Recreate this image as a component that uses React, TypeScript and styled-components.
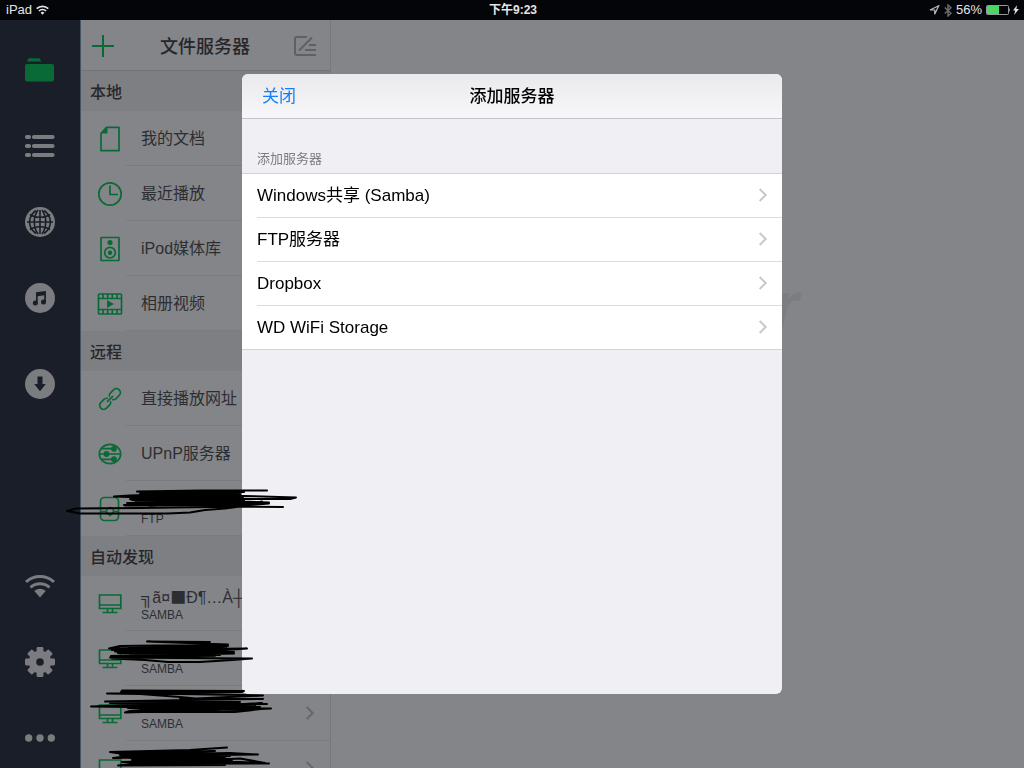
import React from 'react';
import styled, { createGlobalStyle } from 'styled-components';

const GREEN = '#0a6a37';
const NAVY = '#1a1e29';
const MUTED = '#7b7c80';

const GlobalStyle = createGlobalStyle`
  * { box-sizing: border-box; }
  body {
    margin: 0;
    overflow: hidden;
    background: #848588;
    font-family: "Liberation Sans", "Noto Sans CJK SC", sans-serif;
  }
  button { font: inherit; color: inherit; background: none; border: 0; padding: 0; text-align: left; }
  h1, h2, h3, p, ul { margin: 0; padding: 0; font-weight: 400; }
  ul { list-style: none; }
  svg { display: block; flex: none; }
`;

const Screen = styled.div`
  display: flex;
  flex-direction: column;
  height: 100vh;
  overflow: hidden;
`;

const StatusBar = styled.header`
  display: grid;
  grid-template-columns: 1fr auto 1fr;
  align-items: center;
  flex: none;
  height: 20px;
  padding: 0 4px 0 6px;
  background: #040508;
  color: #e4e4e6;
  font-size: 13px;
  line-height: 20px;
`;

const StatusGroup = styled.div<{ $end?: boolean }>`
  display: flex;
  align-items: center;
  justify-content: ${p => (p.$end ? 'flex-end' : 'flex-start')};
  gap: 4px;
`;

const Clock = styled.time`
  font-size: 12px;
  font-weight: 700;
`;

const Main = styled.div`
  display: flex;
  flex: 1;
  min-height: 0;
`;

const Nav = styled.nav`
  display: flex;
  flex-direction: column;
  justify-content: space-between;
  flex: none;
  width: 81px;
  padding: 35px 0 15px;
  background: ${NAVY};
  border-right: 1px solid #465360;
`;

const NavGroup = styled.div`
  display: flex;
  flex-direction: column;
  align-items: center;
  gap: 46px;
`;

const NavButton = styled.button<{ $spaced?: boolean }>`
  width: 30px;
  height: 30px;
  margin-top: ${p => (p.$spaced ? 10 : 0)}px;
  color: ${MUTED};
`;

const Panel = styled.aside`
  flex: none;
  width: 250px;
  overflow: hidden;
  background: #848588;
  border-right: 1px solid #77787b;
  color: #27272b;
`;

const Toolbar = styled.div`
  display: flex;
  align-items: center;
  justify-content: space-between;
  height: 51px;
  padding: 2px 13px 0 11px;
  border-bottom: 1px solid #727376;
`;

const PanelTitle = styled.h1`
  padding: 2px 0 0 2px;
  font-size: 18px;
  font-weight: 500;
  line-height: 24px;
`;

const SectionTitle = styled.h2`
  height: 40px;
  padding: 2px 0 0 9px;
  background: #7e7f82;
  font-size: 16px;
  font-weight: 500;
  line-height: 40px;
`;

const Row = styled.button`
  display: flex;
  align-items: center;
  width: 100%;
  height: 55px;
`;

const RowIcon = styled.span`
  display: flex;
  justify-content: center;
  flex: none;
  width: 45px;
  padding-left: 13px;
  color: ${GREEN};
`;

const RowBody = styled.span`
  display: flex;
  align-items: center;
  justify-content: space-between;
  flex: 1;
  height: 55px;
  padding: 0 15px;
  border-bottom: 1px solid #7a7b7e;
  color: #2d2e32;
`;

const RowText = styled.span`
  display: flex;
  flex-direction: column;
  white-space: nowrap;
`;

const RowName = styled.span`
  min-height: 22px;
  padding-top: 2px;
  font-size: 16px;
  line-height: 20px;
`;

const WideGlyph = styled.span`
  font-family: "Noto Sans CJK SC", sans-serif;
`;

const RowKind = styled.span`
  font-size: 12px;
  line-height: 14px;
`;

const Content = styled.main`
  flex: 1;
  min-width: 0;
  padding-top: 246px;
  text-align: center;
`;

const Watermark = styled.p`
  color: #7c7d80;
  font-size: 67px;
  font-style: italic;
  font-weight: 700;
  line-height: 78px;
`;

const Overlay = styled.div`
  position: fixed;
  inset: 0;
  display: flex;
  align-items: center;
  justify-content: center;
`;

const Dialog = styled.section`
  width: 540px;
  max-width: 100%;
  height: 620px;
  max-height: 100%;
  overflow: hidden;
  border-radius: 6px;
  background: #efeff4;
  color: #000;
`;

const DialogHeader = styled.div`
  display: grid;
  grid-template-columns: 1fr auto 1fr;
  align-items: center;
  height: 45px;
  padding: 2px 20px 0;
  border-bottom: 1px solid #c4c4c8;
  background: linear-gradient(#eaeaec, #f7f7f9);
  font-size: 17px;
  line-height: 24px;
`;

const CloseButton = styled.button`
  justify-self: start;
  color: #157efb;
`;

const DialogTitle = styled.h2`
  font-size: 17px;
  font-weight: 500;
`;

const GroupTitle = styled.h3`
  padding: 30px 15px 4px;
  color: #7c7c81;
  font-size: 13px;
  line-height: 20px;
`;

const OptionList = styled.ul`
  background: #fff;
  border-top: 1px solid #d3d3d7;
  border-bottom: 1px solid #d3d3d7;
`;

const OptionItem = styled.li`
  padding-left: 15px;
`;

const Option = styled.button`
  display: flex;
  align-items: center;
  justify-content: space-between;
  width: 100%;
  height: 44px;
  padding-right: 14px;
  border-bottom: 1px solid #dcdce0;
  font-size: 17px;
  line-height: 24px;

  ${OptionItem}:last-child & {
    height: 43px;
    border-bottom: 0;
  }
`;

const Ink = styled.svg`
  position: fixed;
  top: 0;
  left: 0;
  pointer-events: none;
`;

const Chevron = ({ color }: { color: string }) => (
  <svg width="10" height="15" viewBox="0 0 10 15" fill="none" stroke={color} strokeWidth="2">
    <path d="M1.700 1 7.700 7 1.700 13" />
  </svg>
);

const WifiSmall = () => (
  <svg width="13" height="10" viewBox="0 0 13 10" fill="none" stroke="#e4e4e6" strokeWidth="1.700">
    <path d="M.7 3.700a8.300 8.300 0 0 1 11.600 0M2.900 6a5.100 5.100 0 0 1 7.200 0" />
    <path d="M4.600 7.700a2.800 2.800 0 0 1 3.800 0L6.500 9.800z" fill="#e4e4e6" stroke="none" />
  </svg>
);

const StatusIcons = {
  location: (
    <svg width="11" height="10" viewBox="0 0 11 10" fill="none" stroke="#b9babc" strokeWidth="1.200">
      <path d="M1 5 9.700.8 5.700 9.300V5z" />
    </svg>
  ),
  bluetooth: (
    <svg width="8" height="13" viewBox="0 0 8 13" fill="none" stroke="#6c6d70" strokeWidth="1.400">
      <path d="M.8 3.600 7 9.300 4 12V1l3 2.800L.8 9.400" />
    </svg>
  ),
  battery: (
    <svg width="34" height="10" viewBox="0 0 34 10">
      <rect x=".5" y=".5" width="22" height="9" rx="1" fill="none" stroke="#98999b" />
      <path d="M23 3q2 2 0 4z" fill="#98999b" />
      <rect x="1" y="1" width="12" height="8" fill="#4cd764" />
      <path d="M31 .2 27 5.600h2.300L28 10l5-6h-2.600z" fill="#e4e4e6" />
    </svg>
  ),
};

const navSvg = { width: 30, height: 30, viewBox: '0 0 30 30', fill: 'currentColor' };

const NavIcons = {
  folder: (
    <svg {...navSvg} fill={GREEN}>
      <path d="M2 6.400 3.200 4q.4-.8 1.200-.8h9.400q.8 0 1.200.8l1.200 2.400z" />
      <rect y="9" width="29" height="17.600" rx="2" />
    </svg>
  ),
  list: (
    <svg {...navSvg}>
      {[4, 13, 22].map(y => (
        <g key={y}>
          <rect y={y} width="6" height="4" rx="1.800" />
          <rect x="7" y={y} width="22.500" height="4" rx="1.800" />
        </g>
      ))}
    </svg>
  ),
  globe: (
    <svg {...navSvg}>
      <circle cx="15" cy="15" r="15" />
      <g fill="none" stroke={NAVY} strokeWidth="1.600">
        <path d="M15 3v24M2 15h26" />
        <path d="M10.800 3.500C2.500 10 2.500 20 10.800 26.500M19.200 3.500C27.500 10 27.500 20 19.200 26.500M13 3C8 10 8 20 13 27M17 3C22 10 22 20 17 27" />
        <path d="M5 7.500c5 3.600 15 3.600 20 0M5 22.500c5-3.600 15-3.600 20 0" />
      </g>
    </svg>
  ),
  music: (
    <svg {...navSvg}>
      <circle cx="15" cy="15" r="15" />
      <g fill={NAVY}>
        <path d="M11 9.300 20.900 8v11h-1.700v-6.700l-6.500.9v7.300H11z" />
        <circle cx="10.300" cy="20" r="2.500" />
        <circle cx="18.500" cy="19" r="2.500" />
      </g>
    </svg>
  ),
  download: (
    <svg {...navSvg}>
      <circle cx="15" cy="15" r="15" />
      <path d="M12.500 7.500h5V15h3.300L15 22.300 9.200 15h3.300z" fill={NAVY} />
    </svg>
  ),
  wifi: (
    <svg {...navSvg}>
      <g fill="none" stroke="currentColor" strokeWidth="3">
        <path d="M1 11c8-7.300 20-7.300 28 0M5.500 16.300c5.500-4.900 13.500-4.900 19 0" />
      </g>
      <path d="M9.300 20c3.400-3 8-3 11.400 0L15 26.500z" />
    </svg>
  ),
  gear: (
    <svg {...navSvg}>
      <path
        fillRule="evenodd"
        d="M15 3.800a11.200 11.200 0 1 0 0 22.400 11.200 11.200 0 0 0 0-22.400zm0 7.400a3.800 3.800 0 1 1 0 7.600 3.800 3.800 0 0 1 0-7.600z"
      />
      {[0, 45, 90, 135, 180, 225, 270, 315].map(a => (
        <rect key={a} x="11.600" y="0" width="6.800" height="7.500" rx="1.300" transform={`rotate(${a} 15 15)`} />
      ))}
    </svg>
  ),
  more: (
    <svg {...navSvg}>
      <circle cx="3.700" cy="15" r="3.700" />
      <circle cx="15" cy="15" r="3.700" />
      <circle cx="26.300" cy="15" r="3.700" />
    </svg>
  ),
};

const rowSvg = {
  width: 26,
  height: 26,
  viewBox: '0 0 26 26',
  fill: 'none',
  stroke: 'currentColor',
  strokeWidth: 1.7,
};

const RowIcons = {
  document: (
    <svg {...rowSvg}>
      <path d="M9.500 1.300H22v23.400H4V7.500z" strokeLinejoin="round" />
      <path d="M10.500 1v6.500H4z" fill="currentColor" stroke="none" />
    </svg>
  ),
  clock: (
    <svg {...rowSvg}>
      <circle cx="13" cy="13" r="11.200" />
      <path d="M13 4.500V13.500h8" />
    </svg>
  ),
  speaker: (
    <svg {...rowSvg}>
      <rect x="4" y="1.500" width="18" height="23" rx=".5" />
      <circle cx="13" cy="6.500" r="2.600" fill="currentColor" stroke="none" />
      <circle cx="13" cy="16.700" r="5.300" />
      <circle cx="13" cy="16.700" r="2.200" fill="currentColor" stroke="none" />
    </svg>
  ),
  film: (
    <svg {...rowSvg}>
      <rect x="1.500" y="3" width="23" height="20" rx="1" />
      <path d="M1.500 7.500h23M1.500 18.500h23M6 3v4.500M10.700 3v4.500M15.300 3v4.500M20 3v4.500M6 18.500V23M10.700 18.500V23M15.300 18.500V23M20 18.500V23" />
      <path d="M10 9l7 4-7 4z" fill="currentColor" stroke="none" />
    </svg>
  ),
  link: (
    <svg {...rowSvg} strokeLinecap="round">
      <g transform="rotate(-45 13 13)">
        <path d="M14.500 10.500Q15.500 9 18 9h4a4 4 0 0 1 0 8h-4q-2.500 0-3.500-1.500" />
        <path d="M11.500 10.500Q10.500 9 8 9H4a4 4 0 0 0 0 8h4q2.500 0 3.500-1.500" />
        <path d="M9.500 13h7" />
      </g>
    </svg>
  ),
  upnp: (
    <svg {...rowSvg}>
      <ellipse cx="13" cy="13" rx="10.700" ry="9.700" />
      <path d="M5 7.700h11M2 13h7M10 13h14M5 18.300h11" />
      <g fill="currentColor" stroke="none">
        <circle cx="17" cy="7.800" r="2.900" />
        <circle cx="9.500" cy="13" r="2.900" />
        <circle cx="17" cy="18.200" r="2.900" />
      </g>
    </svg>
  ),
  disk: (
    <svg {...rowSvg}>
      <rect x="3.500" y="1.500" width="18" height="23" rx="4" />
      <path d="M3.500 15.500H9l4 4 4-4h4.500" />
      <circle cx="13" cy="15" r="3.500" />
    </svg>
  ),
  monitor: (
    <svg {...rowSvg}>
      <path d="M2.500 4h21.300v13.500H2.500zM2.500 14h21.300M10.500 17.500v3.700M15.500 17.500v3.700M5.500 21.500h15" />
    </svg>
  ),
};

interface Entry {
  icon: keyof typeof RowIcons;
  name?: React.ReactNode;
  kind?: string;
}

const sections: { title: string; entries: Entry[] }[] = [
  {
    title: '本地',
    entries: [
      { icon: 'document', name: '我的文档' },
      { icon: 'clock', name: '最近播放' },
      { icon: 'speaker', name: 'iPod媒体库' },
      { icon: 'film', name: '相册视频' },
    ],
  },
  {
    title: '远程',
    entries: [
      { icon: 'link', name: '直接播放网址' },
      { icon: 'upnp', name: 'UPnP服务器' },
      { icon: 'disk', kind: 'FTP' },
    ],
  },
  {
    title: '自动发现',
    entries: [
      {
        icon: 'monitor',
        name: (
          <>
            ╗ã¤<WideGlyph>■</WideGlyph>Ð¶…À┼
          </>
        ),
        kind: 'SAMBA',
      },
      { icon: 'monitor', kind: 'SAMBA' },
      { icon: 'monitor', kind: 'SAMBA' },
      { icon: 'monitor' },
    ],
  },
];

const options = ['Windows共享 (Samba)', 'FTP服务器', 'Dropbox', 'WD WiFi Storage'];

const topNav = [
  { id: 'folder', label: '文件' },
  { id: 'list', label: '列表' },
  { id: 'globe', label: '网络' },
  { id: 'music', label: '音乐' },
  { id: 'download', label: '下载' },
] as const;

const bottomNav = [
  { id: 'wifi', label: 'WiFi' },
  { id: 'gear', label: '设置' },
  { id: 'more', label: '更多' },
] as const;

/* Hand-drawn pen strokes that cross out the private server names. */
const strokes = [
  'M267 490.500 L200 490.500 137 491.500 150 493 244 492 130 495.500 114 496.500 128 497 240 493.500 132 498 243 496 296 497.500 290 499 240 499 132 500 242 501 127 503 243 503 124 505 240 500 140 502 242 497 150 496 235 495 140 498 269 502.500 130 504.500 125 505.500 220 505 269 503.500 240 506 130 499 150 506 244 500 140 494 243 498 150 501 240 494.500',
  'M283 507 L244 506.500 140 508 76 508.500 67 511 80 513.500 168 513.500 190 512.500 205 510 225 508.500 244 506 262 501.500',
  'M210 642 L147 641.500 228 644.500 120 646 109 648.500 228 646 112 650 226 648 115 651.500 225 650 247 648.500 200 649 118 653 234 653.500 120 656 226 650 128 648 222 647 130 655 220 655 111 656 234 652 125 649.500 218 653 140 651 220 645.500 130 652 215 656 110 657.500 180 658 252 658.500 232 660 200 662 168 662 145 660 112 658.500',
  'M244 691 L122 690.500 121 692 242 692 107 693.500 140 694 180 697 196 698.500 263 695.500 180 694 140 693.500',
  'M180 699 L263 699 190 700 105 701.500 240 702 110 703 267 704 130 705 91 706.500 130 707 262 704 130 706 271 708.500 240 710 128 708 255 705.500 140 710 250 709 125 712.500 130 711 262 703 145 712 235 712 266 708.500 150 707 240 706 145 709 260 707',
  'M227 747.500 L190 750 110 752 120 753.500 215 751 120 755 230 753 258 754.500 130 756 113 758 230 756 132 760 230 759 122 762 240 762 269 763.500 130 764 118 765.500 225 765 130 758 225 757 140 761 232 760 150 753 225 755 135 759 220 763 145 764 240 758.500 265 763',
];

export default function App() {
  return (
    <>
      <GlobalStyle />
      <Screen>
        <StatusBar>
          <StatusGroup>
            <span>iPad</span>
            <WifiSmall />
          </StatusGroup>
          <Clock>下午9:23</Clock>
          <StatusGroup $end>
            {StatusIcons.location}
            {StatusIcons.bluetooth}
            <span>56%</span>
            {StatusIcons.battery}
          </StatusGroup>
        </StatusBar>
        <Main>
          <Nav>
            <NavGroup>
              {topNav.map(n => (
                <NavButton key={n.id} aria-label={n.label} $spaced={n.id === 'download'}>
                  {NavIcons[n.id]}
                </NavButton>
              ))}
            </NavGroup>
            <NavGroup>
              {bottomNav.map(n => (
                <NavButton key={n.id} aria-label={n.label}>
                  {NavIcons[n.id]}
                </NavButton>
              ))}
            </NavGroup>
          </Nav>
          <Panel>
            <Toolbar>
              <button aria-label="添加">
                <svg width="22" height="22" viewBox="0 0 22 22" stroke={GREEN} strokeWidth="2">
                  <path d="M11 0v22M0 11h22" />
                </svg>
              </button>
              <PanelTitle>文件服务器</PanelTitle>
              <button aria-label="编辑">
                <svg width="23" height="20" viewBox="0 0 23 20" fill="none" stroke="#5f6064" strokeWidth="2">
                  <path d="M13 1H3Q1 1 1 3v14q0 2 2 2h19M5 14.500 18 1.500M15 9h7M11 14h11" />
                </svg>
              </button>
            </Toolbar>
            {sections.map(s => (
              <section key={s.title}>
                <SectionTitle>{s.title}</SectionTitle>
                {s.entries.map((e, i) => (
                  <Row key={i}>
                    <RowIcon>{RowIcons[e.icon]}</RowIcon>
                    <RowBody>
                      <RowText>
                        {(e.name || e.kind) && <RowName>{e.name}</RowName>}
                        {e.kind && <RowKind>{e.kind}</RowKind>}
                      </RowText>
                      <Chevron color="#66676a" />
                    </RowBody>
                  </Row>
                ))}
              </section>
            ))}
          </Panel>
          <Content>
            <Watermark>nPlayer</Watermark>
          </Content>
        </Main>
      </Screen>
      <Overlay>
        <Dialog role="dialog" aria-modal="true" aria-labelledby="dialog-title">
          <DialogHeader>
            <CloseButton>关闭</CloseButton>
            <DialogTitle id="dialog-title">添加服务器</DialogTitle>
          </DialogHeader>
          <GroupTitle>添加服务器</GroupTitle>
          <OptionList>
            {options.map(o => (
              <OptionItem key={o}>
                <Option>
                  <span>{o}</span>
                  <Chevron color="#c7c7cc" />
                </Option>
              </OptionItem>
            ))}
          </OptionList>
        </Dialog>
      </Overlay>
      <Ink width="310" height="768" viewBox="0 0 310 768" fill="none" stroke="#000" strokeWidth="2" strokeLinejoin="round" strokeLinecap="round" aria-hidden="true">
        {strokes.map(d => (
          <path key={d} d={d} />
        ))}
      </Ink>
    </>
  );
}
